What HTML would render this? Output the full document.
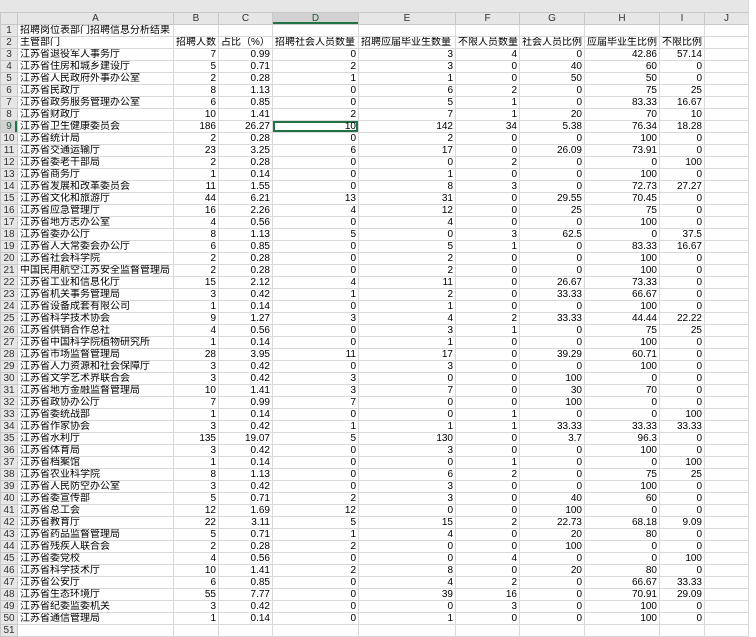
<!DOCTYPE html>
<html><head><meta charset="utf-8"><style>
body{margin:0;background:#fff;width:756px;height:629px;overflow:hidden;font-family:"Liberation Sans","Noto Sans CJK SC",sans-serif;font-size:10px;color:#000}
.top{height:12px;background:#e6e6e6}
table{border-collapse:collapse;table-layout:fixed;width:748px}
tr{height:12px}
td,th{height:11px;padding:0 2px;border:1px solid #d9d9d9;white-space:nowrap;overflow:hidden;line-height:11px;font-weight:normal}
th{background:#e6e6e6;color:#333;text-align:center;border-color:#c8c8c8;padding:0}
td{text-align:right}
td:nth-child(2){text-align:left}
tr.l td{text-align:left}
th.sel{background:#d2d2d2;box-shadow:inset 0 -2px 0 #217346;color:#1e5c38}
th.rsel{background:#d2d2d2;box-shadow:inset -2px 0 0 #217346;color:#1e5c38}
td.cur{box-shadow:inset 0 0 0 2px #217346}
.rest{position:absolute;left:748px;top:0;width:8px;height:629px;background:#fff;border-left:1px solid #d9d9d9}
</style></head><body>
<div class="top"></div>
<table>
<colgroup><col style="width:17px"><col style="width:156px"><col style="width:45px"><col style="width:54px"><col style="width:86px"><col style="width:97px"><col style="width:64px"><col style="width:65px"><col style="width:75px"><col style="width:45px"><col style="width:44px"></colgroup>
<tr class="h"><th></th><th>A</th><th>B</th><th>C</th><th class="sel">D</th><th>E</th><th>F</th><th>G</th><th>H</th><th>I</th><th>J</th></tr>
<tr class="l"><th>1</th><td>招聘岗位表部门招聘信息分析结果</td><td></td><td></td><td></td><td></td><td></td><td></td><td></td><td></td><td></td></tr>
<tr class="l"><th>2</th><td>主管部门</td><td>招聘人数</td><td>占比（%）</td><td>招聘社会人员数量</td><td>招聘应届毕业生数量</td><td>不限人员数量</td><td>社会人员比例</td><td>应届毕业生比例</td><td>不限比例</td><td></td></tr>
<tr><th>3</th><td>江苏省退役军人事务厅</td><td>7</td><td>0.99</td><td>0</td><td>3</td><td>4</td><td>0</td><td>42.86</td><td>57.14</td><td></td></tr>
<tr><th>4</th><td>江苏省住房和城乡建设厅</td><td>5</td><td>0.71</td><td>2</td><td>3</td><td>0</td><td>40</td><td>60</td><td>0</td><td></td></tr>
<tr><th>5</th><td>江苏省人民政府外事办公室</td><td>2</td><td>0.28</td><td>1</td><td>1</td><td>0</td><td>50</td><td>50</td><td>0</td><td></td></tr>
<tr><th>6</th><td>江苏省民政厅</td><td>8</td><td>1.13</td><td>0</td><td>6</td><td>2</td><td>0</td><td>75</td><td>25</td><td></td></tr>
<tr><th>7</th><td>江苏省政务服务管理办公室</td><td>6</td><td>0.85</td><td>0</td><td>5</td><td>1</td><td>0</td><td>83.33</td><td>16.67</td><td></td></tr>
<tr><th>8</th><td>江苏省财政厅</td><td>10</td><td>1.41</td><td>2</td><td>7</td><td>1</td><td>20</td><td>70</td><td>10</td><td></td></tr>
<tr><th class="rsel">9</th><td>江苏省卫生健康委员会</td><td>186</td><td>26.27</td><td class="cur">10</td><td>142</td><td>34</td><td>5.38</td><td>76.34</td><td>18.28</td><td></td></tr>
<tr><th>10</th><td>江苏省统计局</td><td>2</td><td>0.28</td><td>0</td><td>2</td><td>0</td><td>0</td><td>100</td><td>0</td><td></td></tr>
<tr><th>11</th><td>江苏省交通运输厅</td><td>23</td><td>3.25</td><td>6</td><td>17</td><td>0</td><td>26.09</td><td>73.91</td><td>0</td><td></td></tr>
<tr><th>12</th><td>江苏省委老干部局</td><td>2</td><td>0.28</td><td>0</td><td>0</td><td>2</td><td>0</td><td>0</td><td>100</td><td></td></tr>
<tr><th>13</th><td>江苏省商务厅</td><td>1</td><td>0.14</td><td>0</td><td>1</td><td>0</td><td>0</td><td>100</td><td>0</td><td></td></tr>
<tr><th>14</th><td>江苏省发展和改革委员会</td><td>11</td><td>1.55</td><td>0</td><td>8</td><td>3</td><td>0</td><td>72.73</td><td>27.27</td><td></td></tr>
<tr><th>15</th><td>江苏省文化和旅游厅</td><td>44</td><td>6.21</td><td>13</td><td>31</td><td>0</td><td>29.55</td><td>70.45</td><td>0</td><td></td></tr>
<tr><th>16</th><td>江苏省应急管理厅</td><td>16</td><td>2.26</td><td>4</td><td>12</td><td>0</td><td>25</td><td>75</td><td>0</td><td></td></tr>
<tr><th>17</th><td>江苏省地方志办公室</td><td>4</td><td>0.56</td><td>0</td><td>4</td><td>0</td><td>0</td><td>100</td><td>0</td><td></td></tr>
<tr><th>18</th><td>江苏省委办公厅</td><td>8</td><td>1.13</td><td>5</td><td>0</td><td>3</td><td>62.5</td><td>0</td><td>37.5</td><td></td></tr>
<tr><th>19</th><td>江苏省人大常委会办公厅</td><td>6</td><td>0.85</td><td>0</td><td>5</td><td>1</td><td>0</td><td>83.33</td><td>16.67</td><td></td></tr>
<tr><th>20</th><td>江苏省社会科学院</td><td>2</td><td>0.28</td><td>0</td><td>2</td><td>0</td><td>0</td><td>100</td><td>0</td><td></td></tr>
<tr><th>21</th><td>中国民用航空江苏安全监督管理局</td><td>2</td><td>0.28</td><td>0</td><td>2</td><td>0</td><td>0</td><td>100</td><td>0</td><td></td></tr>
<tr><th>22</th><td>江苏省工业和信息化厅</td><td>15</td><td>2.12</td><td>4</td><td>11</td><td>0</td><td>26.67</td><td>73.33</td><td>0</td><td></td></tr>
<tr><th>23</th><td>江苏省机关事务管理局</td><td>3</td><td>0.42</td><td>1</td><td>2</td><td>0</td><td>33.33</td><td>66.67</td><td>0</td><td></td></tr>
<tr><th>24</th><td>江苏省设备成套有限公司</td><td>1</td><td>0.14</td><td>0</td><td>1</td><td>0</td><td>0</td><td>100</td><td>0</td><td></td></tr>
<tr><th>25</th><td>江苏省科学技术协会</td><td>9</td><td>1.27</td><td>3</td><td>4</td><td>2</td><td>33.33</td><td>44.44</td><td>22.22</td><td></td></tr>
<tr><th>26</th><td>江苏省供销合作总社</td><td>4</td><td>0.56</td><td>0</td><td>3</td><td>1</td><td>0</td><td>75</td><td>25</td><td></td></tr>
<tr><th>27</th><td>江苏省中国科学院植物研究所</td><td>1</td><td>0.14</td><td>0</td><td>1</td><td>0</td><td>0</td><td>100</td><td>0</td><td></td></tr>
<tr><th>28</th><td>江苏省市场监督管理局</td><td>28</td><td>3.95</td><td>11</td><td>17</td><td>0</td><td>39.29</td><td>60.71</td><td>0</td><td></td></tr>
<tr><th>29</th><td>江苏省人力资源和社会保障厅</td><td>3</td><td>0.42</td><td>0</td><td>3</td><td>0</td><td>0</td><td>100</td><td>0</td><td></td></tr>
<tr><th>30</th><td>江苏省文学艺术界联合会</td><td>3</td><td>0.42</td><td>3</td><td>0</td><td>0</td><td>100</td><td>0</td><td>0</td><td></td></tr>
<tr><th>31</th><td>江苏省地方金融监督管理局</td><td>10</td><td>1.41</td><td>3</td><td>7</td><td>0</td><td>30</td><td>70</td><td>0</td><td></td></tr>
<tr><th>32</th><td>江苏省政协办公厅</td><td>7</td><td>0.99</td><td>7</td><td>0</td><td>0</td><td>100</td><td>0</td><td>0</td><td></td></tr>
<tr><th>33</th><td>江苏省委统战部</td><td>1</td><td>0.14</td><td>0</td><td>0</td><td>1</td><td>0</td><td>0</td><td>100</td><td></td></tr>
<tr><th>34</th><td>江苏省作家协会</td><td>3</td><td>0.42</td><td>1</td><td>1</td><td>1</td><td>33.33</td><td>33.33</td><td>33.33</td><td></td></tr>
<tr><th>35</th><td>江苏省水利厅</td><td>135</td><td>19.07</td><td>5</td><td>130</td><td>0</td><td>3.7</td><td>96.3</td><td>0</td><td></td></tr>
<tr><th>36</th><td>江苏省体育局</td><td>3</td><td>0.42</td><td>0</td><td>3</td><td>0</td><td>0</td><td>100</td><td>0</td><td></td></tr>
<tr><th>37</th><td>江苏省档案馆</td><td>1</td><td>0.14</td><td>0</td><td>0</td><td>1</td><td>0</td><td>0</td><td>100</td><td></td></tr>
<tr><th>38</th><td>江苏省农业科学院</td><td>8</td><td>1.13</td><td>0</td><td>6</td><td>2</td><td>0</td><td>75</td><td>25</td><td></td></tr>
<tr><th>39</th><td>江苏省人民防空办公室</td><td>3</td><td>0.42</td><td>0</td><td>3</td><td>0</td><td>0</td><td>100</td><td>0</td><td></td></tr>
<tr><th>40</th><td>江苏省委宣传部</td><td>5</td><td>0.71</td><td>2</td><td>3</td><td>0</td><td>40</td><td>60</td><td>0</td><td></td></tr>
<tr><th>41</th><td>江苏省总工会</td><td>12</td><td>1.69</td><td>12</td><td>0</td><td>0</td><td>100</td><td>0</td><td>0</td><td></td></tr>
<tr><th>42</th><td>江苏省教育厅</td><td>22</td><td>3.11</td><td>5</td><td>15</td><td>2</td><td>22.73</td><td>68.18</td><td>9.09</td><td></td></tr>
<tr><th>43</th><td>江苏省药品监督管理局</td><td>5</td><td>0.71</td><td>1</td><td>4</td><td>0</td><td>20</td><td>80</td><td>0</td><td></td></tr>
<tr><th>44</th><td>江苏省残疾人联合会</td><td>2</td><td>0.28</td><td>2</td><td>0</td><td>0</td><td>100</td><td>0</td><td>0</td><td></td></tr>
<tr><th>45</th><td>江苏省委党校</td><td>4</td><td>0.56</td><td>0</td><td>0</td><td>4</td><td>0</td><td>0</td><td>100</td><td></td></tr>
<tr><th>46</th><td>江苏省科学技术厅</td><td>10</td><td>1.41</td><td>2</td><td>8</td><td>0</td><td>20</td><td>80</td><td>0</td><td></td></tr>
<tr><th>47</th><td>江苏省公安厅</td><td>6</td><td>0.85</td><td>0</td><td>4</td><td>2</td><td>0</td><td>66.67</td><td>33.33</td><td></td></tr>
<tr><th>48</th><td>江苏省生态环境厅</td><td>55</td><td>7.77</td><td>0</td><td>39</td><td>16</td><td>0</td><td>70.91</td><td>29.09</td><td></td></tr>
<tr><th>49</th><td>江苏省纪委监委机关</td><td>3</td><td>0.42</td><td>0</td><td>0</td><td>3</td><td>0</td><td>100</td><td>0</td><td></td></tr>
<tr><th>50</th><td>江苏省通信管理局</td><td>1</td><td>0.14</td><td>0</td><td>1</td><td>0</td><td>0</td><td>100</td><td>0</td><td></td></tr>
<tr><th>51</th><td></td><td></td><td></td><td></td><td></td><td></td><td></td><td></td><td></td><td></td></tr>
</table>
<div class="rest"></div>
</body></html>
